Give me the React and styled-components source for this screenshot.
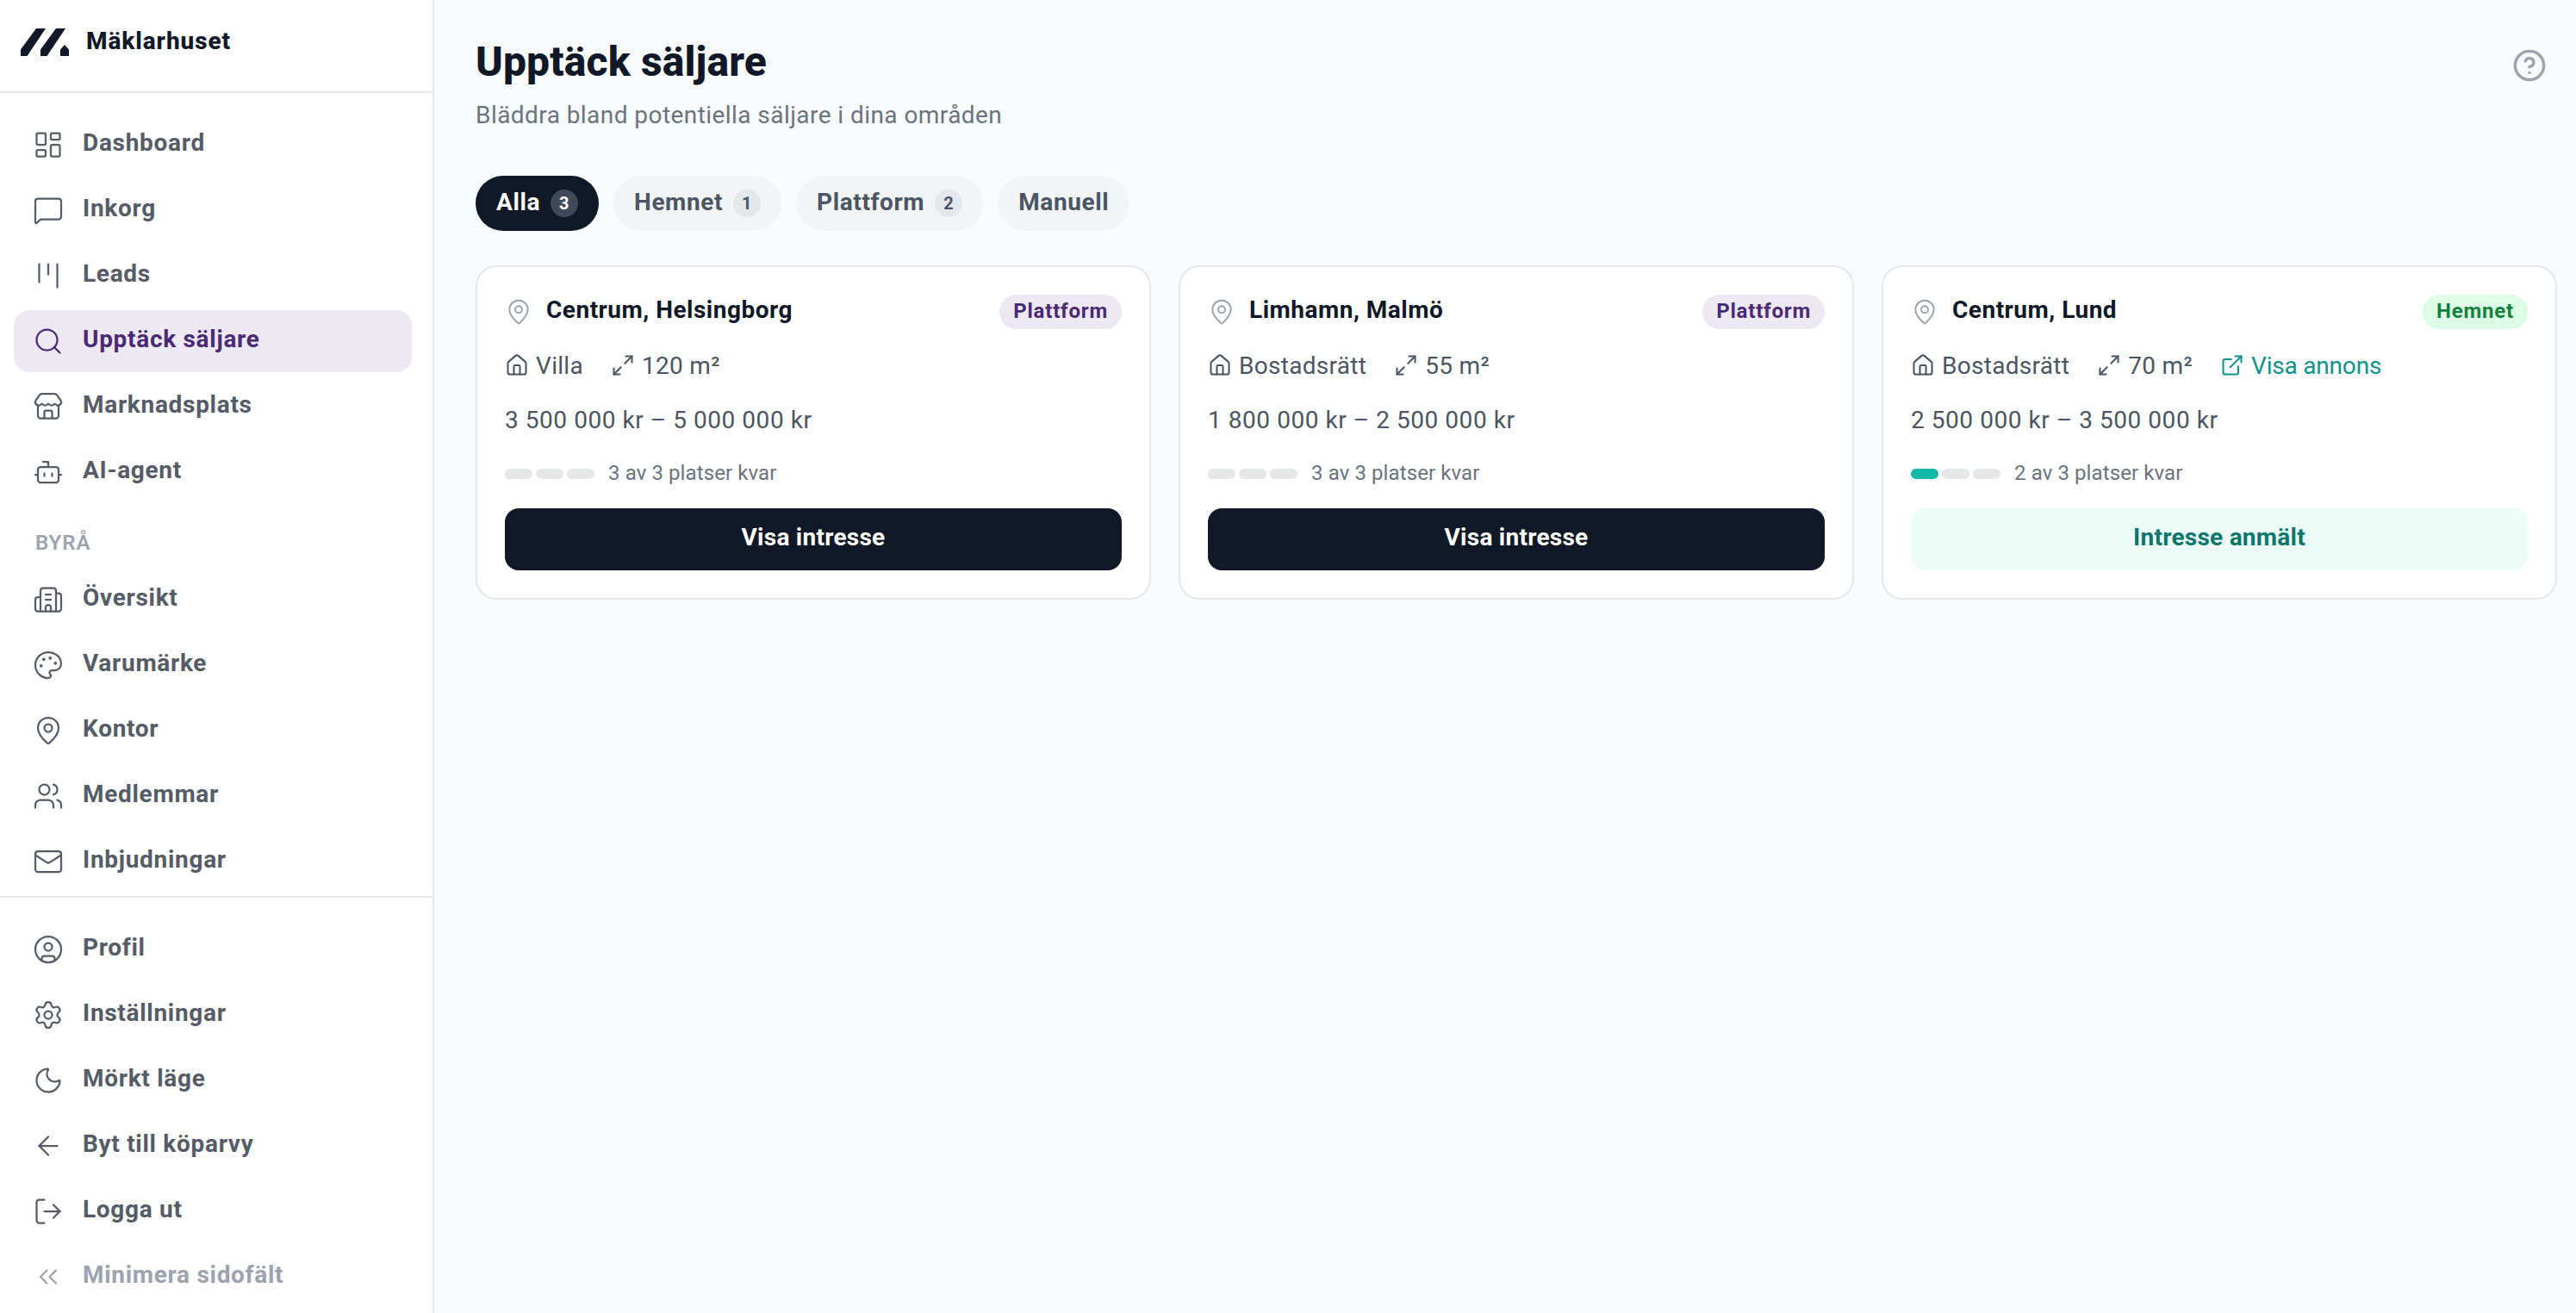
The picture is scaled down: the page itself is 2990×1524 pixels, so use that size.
import React from 'react';
import styled, { createGlobalStyle } from 'styled-components';
import {
  LayoutDashboard, MessageSquare, Kanban, Search, Store, Bot, Building2, Palette, MapPin, Users, Mail,
  CircleUser, Settings, Moon, ArrowLeft, LogOut, ChevronsLeft, House, Maximize2, ExternalLink, CircleHelp,
} from 'lucide-react';

const Global = createGlobalStyle`
  html, body { margin: 0; padding: 0; background: #f9fafb; }
  body { font-family: Roboto, "Noto Sans", sans-serif; color: #111827; }
  * { box-sizing: border-box; }
`;

const Shell = styled.div`
  display: flex;
  width: 100%;
  height: 100vh;
  overflow: hidden;
`;

const Sidebar = styled.aside`
  width: 504px;
  flex: none;
  height: 100%;
  background: #fff;
  border-right: 2px solid #e5e7eb;
  display: flex;
  flex-direction: column;
`;

const Brand = styled.div`
  height: 108px;
  flex: none;
  border-bottom: 2px solid #e5e7eb;
  display: flex;
  align-items: center;
  gap: 20px;
  padding: 0 0 8px 24px;
`;

const BrandName = styled.span`
  font-size: 28px;
  font-weight: 800;
  color: #111827;
  letter-spacing: 0.9px;
  padding-bottom: 3px;
`;

const NavGroup = styled.nav`
  display: flex;
  flex-direction: column;
  gap: 4px;
  padding: 24px 24px 4px 16px;
`;

const FootGroup = styled(NavGroup)`
  border-top: 2px solid #e5e7eb;
  padding-bottom: 6px;
  margin-top: auto;
`;

const NavItem = styled.a`
  height: 72px;
  display: flex;
  align-items: center;
  gap: 22px;
  padding-left: 22px;
  border-radius: 18px;
  font-size: 28px;
  font-weight: 700;
  letter-spacing: 0.7px;
  color: ${p => (p.$active ? '#4a2a75' : p.$muted ? '#9ca3af' : '#565c67')};
  background: ${p => (p.$active ? '#ede9f2' : 'transparent')};
`;

const NavLabel = styled.span`
  padding-bottom: 5px;
`;

const SectionLabel = styled.div`
  height: 68px;
  padding: 18px 0 0 25px;
  font-size: 24px;
  font-weight: 600;
  letter-spacing: 1px;
  color: #9ca3af;
  line-height: 48px;
`;

const Main = styled.main`
  flex: 1;
  min-width: 0;
  padding: 40px 22px 0 48px;
`;

const PageHead = styled.header`
  display: flex;
  justify-content: space-between;
  align-items: flex-start;
`;

const Title = styled.h1`
  margin: 0;
  font-size: 48px;
  line-height: 64px;
  font-weight: 800;
  color: #111827;
  letter-spacing: 0.15px;
`;

const Subtitle = styled.p`
  margin: 10px 0 0;
  font-size: 28px;
  line-height: 40px;
  font-weight: 400;
  color: #6b7280;
  letter-spacing: 0.44px;
`;

const HelpButton = styled.span`
  display: flex;
  color: #9ca3af;
  margin: 16px 12px 0 0;
`;

const Tabs = styled.div`
  display: flex;
  gap: 17px;
  margin-top: 50px;
`;

const Tab = styled.button`
  height: 64px;
  border: 0;
  border-radius: 32px;
  padding: 0 24px;
  display: flex;
  align-items: center;
  gap: 12px;
  font-family: inherit;
  font-size: 28px;
  font-weight: 700;
  letter-spacing: 0.6px;
  background: ${p => (p.$active ? '#111827' : '#f3f4f6')};
  color: ${p => (p.$active ? '#fff' : '#4b5563')};
`;

const TabLabel = styled.span`
  padding-bottom: 4px;
`;

const Count = styled.span`
  width: 32px;
  height: 32px;
  border-radius: 50%;
  display: flex;
  align-items: center;
  justify-content: center;
  font-size: 20px;
  font-weight: 700;
  background: ${p => (p.$active ? '#41485a' : '#e5e7eb')};
  color: ${p => (p.$active ? '#fff' : '#4b5563')};
`;

const Cards = styled.div`
  display: grid;
  grid-template-columns: repeat(3, 1fr);
  gap: 32px;
  margin-top: 40px;
`;

const Card = styled.article`
  background: #fff;
  border: 2px solid #e5e7eb;
  border-radius: 24px;
  padding: 32px;
`;

const CardTop = styled.div`
  height: 40px;
  display: flex;
  align-items: center;
  justify-content: space-between;
`;

const Place = styled.div`
  display: flex;
  align-items: center;
  gap: 16px;
  font-size: 28px;
  font-weight: 700;
  letter-spacing: 0.5px;
  color: #111827;
  svg { color: #9ca3af; }
`;

const PlaceName = styled.span`
  padding-bottom: 5px;
`;

const Source = styled.span`
  height: 40px;
  padding: 0 16px 3px;
  border-radius: 20px;
  display: flex;
  align-items: center;
  font-size: 24px;
  font-weight: 700;
  letter-spacing: 0.8px;
  background: ${p => (p.$kind === 'Hemnet' ? '#dcfce7' : '#ede9f2')};
  color: ${p => (p.$kind === 'Hemnet' ? '#15803d' : '#4a2a75')};
`;

const Facts = styled.div`
  height: 40px;
  margin-top: 22px;
  display: flex;
  align-items: center;
  gap: 32px;
  font-size: 28px;
  letter-spacing: 0.3px;
  color: #4b5563;
`;

const Fact = styled.span`
  display: flex;
  align-items: center;
  gap: 8px;
  color: ${p => (p.$link ? '#0d9488' : 'inherit')};
  letter-spacing: ${p => (p.$link ? '-0.2px' : 'inherit')};
`;

const Price = styled.div`
  height: 40px;
  margin-top: 24px;
  line-height: 40px;
  font-size: 28px;
  letter-spacing: 0.55px;
  color: #4b5563;
`;

const Slots = styled.div`
  height: 32px;
  margin-top: 26px;
  display: flex;
  align-items: center;
  gap: 16px;
  font-size: 24px;
  letter-spacing: 0.1px;
  color: #6b7280;
`;

const SlotText = styled.span`
  padding-bottom: 3px;
`;

const SlotBars = styled.div`
  display: flex;
  gap: 4px;
`;

const SlotBar = styled.i`
  display: block;
  width: 32px;
  height: 12px;
  border-radius: 6px;
  background: ${p => (p.$on ? '#14b8a6' : '#e5e7eb')};
`;

const Action = styled.button`
  display: block;
  width: 100%;
  height: 72px;
  margin-top: 24px;
  padding: 0 0 5px;
  border: 0;
  border-radius: 16px;
  font-family: inherit;
  font-size: 28px;
  font-weight: 700;
  letter-spacing: 0.25px;
  background: ${p => (p.$done ? '#ecfdf7' : '#111827')};
  color: ${p => (p.$done ? '#0f766e' : '#fff')};
`;

const Logo = () => (
  <svg width="56" height="32" viewBox="0 0 56 32" fill="#111827" aria-hidden="true">
    <path d="M0 24.5 18 0h11L7.500 32H0z" />
    <path d="M23 24.500 41 0h11L30.500 32H23z" />
    <path d="M46 32v-7.500l5-5.500 5 5.500V32z" />
  </svg>
);

const primary = [
  ['Dashboard', LayoutDashboard], ['Inkorg', MessageSquare], ['Leads', Kanban],
  ['Upptäck säljare', Search, 'active'], ['Marknadsplats', Store], ['AI-agent', Bot],
];
const agency = [
  ['Översikt', Building2], ['Varumärke', Palette], ['Kontor', MapPin], ['Medlemmar', Users], ['Inbjudningar', Mail],
];
const footer = [
  ['Profil', CircleUser], ['Inställningar', Settings], ['Mörkt läge', Moon],
  ['Byt till köparvy', ArrowLeft], ['Logga ut', LogOut], ['Minimera sidofält', ChevronsLeft, 'muted'],
];
const tabs = [['Alla', 3, true], ['Hemnet', 1], ['Plattform', 2], ['Manuell']];
const listings = [
  { place: 'Centrum, Helsingborg', source: 'Plattform', type: 'Villa', area: '120 m²', price: '3 500 000 kr – 5 000 000 kr', left: 3 },
  { place: 'Limhamn, Malmö', source: 'Plattform', type: 'Bostadsrätt', area: '55 m²', price: '1 800 000 kr – 2 500 000 kr', left: 3 },
  { place: 'Centrum, Lund', source: 'Hemnet', type: 'Bostadsrätt', area: '70 m²', price: '2 500 000 kr – 3 500 000 kr', left: 2, link: true, done: true },
];

const renderNav = items => items.map(([label, Icon, state]) => (
  <NavItem key={label} $active={state === 'active'} $muted={state === 'muted'}>
    <Icon size={36} strokeWidth={1.5} />
    <NavLabel>{label}</NavLabel>
  </NavItem>
));

export default function App() {
  return (
    <Shell>
      <Global />
      <Sidebar>
        <Brand><Logo /><BrandName>Mäklarhuset</BrandName></Brand>
        <NavGroup>
          {renderNav(primary)}
          <SectionLabel>BYRÅ</SectionLabel>
          {renderNav(agency)}
        </NavGroup>
        <FootGroup>{renderNav(footer)}</FootGroup>
      </Sidebar>
      <Main>
        <PageHead>
          <div>
            <Title>Upptäck säljare</Title>
            <Subtitle>Bläddra bland potentiella säljare i dina områden</Subtitle>
          </div>
          <HelpButton><CircleHelp size={40} strokeWidth={2} /></HelpButton>
        </PageHead>
        <Tabs>
          {tabs.map(([label, count, active]) => (
            <Tab key={label} $active={active}>
              <TabLabel>{label}</TabLabel>
              {count && <Count $active={active}>{count}</Count>}
            </Tab>
          ))}
        </Tabs>
        <Cards>
          {listings.map(l => (
            <Card key={l.place}>
              <CardTop>
                <Place><MapPin size={32} strokeWidth={1.5} /><PlaceName>{l.place}</PlaceName></Place>
                <Source $kind={l.source}>{l.source}</Source>
              </CardTop>
              <Facts>
                <Fact><House size={28} strokeWidth={1.75} />{l.type}</Fact>
                <Fact><Maximize2 size={28} strokeWidth={1.75} />{l.area}</Fact>
                {l.link && <Fact $link><ExternalLink size={28} strokeWidth={1.75} />Visa annons</Fact>}
              </Facts>
              <Price>{l.price}</Price>
              <Slots>
                <SlotBars>
                  {[0, 1, 2].map(i => <SlotBar key={i} $on={i < 3 - l.left} />)}
                </SlotBars>
                <SlotText>{l.left} av 3 platser kvar</SlotText>
              </Slots>
              <Action $done={l.done}>{l.done ? 'Intresse anmält' : 'Visa intresse'}</Action>
            </Card>
          ))}
        </Cards>
      </Main>
    </Shell>
  );
}
